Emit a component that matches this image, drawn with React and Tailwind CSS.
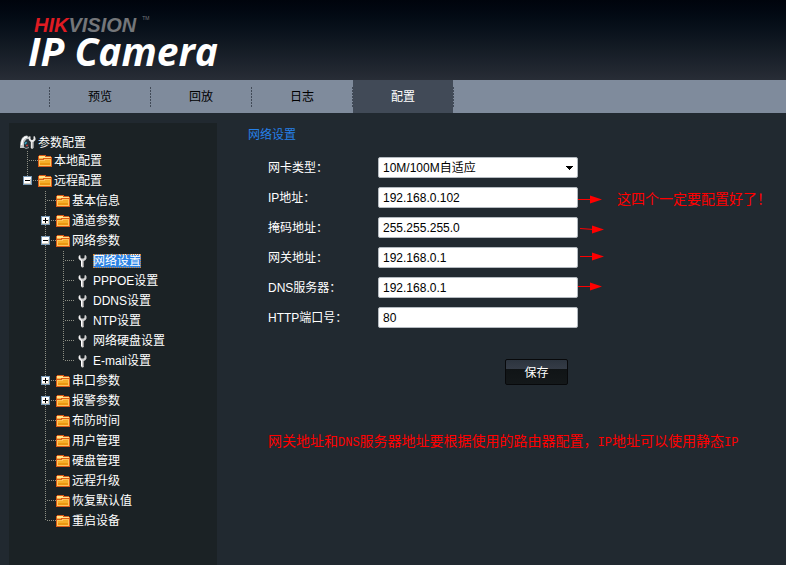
import { useState } from 'react';

const tabs = ['预览', '回放', '日志', '配置'];

const tree = [
  { label: '本地配置' },
  {
    label: '远程配置',
    open: true,
    children: [
      { label: '基本信息' },
      { label: '通道参数', children: [] },
      {
        label: '网络参数',
        open: true,
        children: [
          { label: '网络设置' },
          { label: 'PPPOE设置' },
          { label: 'DDNS设置' },
          { label: 'NTP设置' },
          { label: '网络硬盘设置' },
          { label: 'E-mail设置' },
        ],
      },
      { label: '串口参数', children: [] },
      { label: '报警参数', children: [] },
      { label: '布防时间' },
      { label: '用户管理' },
      { label: '硬盘管理' },
      { label: '远程升级' },
      { label: '恢复默认值' },
      { label: '重启设备' },
    ],
  },
];

const fields = [
  { id: 'ip', label: 'IP地址：', value: '192.168.0.102', arrow: { x: 0, y: 12, slope: 0 }, note: '这四个一定要配置好了！' },
  { id: 'mask', label: '掩码地址：', value: '255.255.255.0', arrow: { x: 2, y: 11, slope: 1 } },
  { id: 'gateway', label: '网关地址：', value: '192.168.0.1', arrow: { x: 2, y: 9, slope: 0 } },
  { id: 'dns', label: 'DNS服务器：', value: '192.168.0.1', arrow: { x: 0, y: 9, slope: 0 } },
  { id: 'http', label: 'HTTP端口号：', value: '80' },
];

const inputClass = 'h-[21px] w-full rounded-[2px] border border-[#b4bac0] bg-white px-1 text-xs text-black outline-none';

function Guide({ vertical, branch, last, toggle }) {
  return (
    <svg width="18" height="20" viewBox="0 0 18 20" shapeRendering="crispEdges" className="shrink-0" aria-hidden="true">
      {vertical && <path d={last ? 'M7.5 1V10' : 'M7.5 1V20'} stroke="#8d8f84" strokeDasharray="1 1" />}
      {branch && <path d="M9 10.5H18" stroke="#8d8f84" strokeDasharray="1 1" />}
      {toggle && (
        <g>
          <rect x="3" y="6" width="9" height="9" fill="#7898b5" />
          <rect x="4" y="7" width="7" height="7" fill="#fff" />
          <path d="M4 13.5H11M10.5 9V14" stroke="#d6d2c6" fill="none" />
          <path d={toggle === 'open' ? 'M5 10.5H10' : 'M5 10.5H10M7.5 8V13'} stroke="#000" />
        </g>
      )}
    </svg>
  );
}

function FolderIcon() {
  return (
    <svg width="14" height="12" viewBox="0 0 14 12" shapeRendering="crispEdges" className="shrink-0" aria-hidden="true">
      <path d="M1 0H8V1H13V2H14V12H0V1H1Z" fill="#d85a18" />
      <path d="M1 1H7V2H13V3H1Z" fill="#ffe58c" />
      <path d="M1 3H5V4H1Z" fill="#f5b545" />
      <path d="M1 5H6V4H13V11H1Z" fill="#ffc65c" />
      <path d="M2 6H7V5H12V10H2Z" fill="#f6ae2a" />
      <path d="M2 8H12V10H2Z" fill="#ec960f" />
    </svg>
  );
}

function WrenchIcon() {
  return (
    <svg width="9" height="14" viewBox="0 0 9 14" className="shrink-0" aria-hidden="true">
      <path d="M1.5 1L0.5 2.5V4.5L1.5 6L3 7V12.5L4 13.5H5L6 12.5V7L7.5 6L8.5 4.5V2.5L7.5 1L6.5 1.5V3.5L5.5 4.5H3.5L2.5 3.5V1.5Z" fill="#d0d0d0" />
      <path d="M1.5 2.5V4.5L3.5 6V12" stroke="#fff" fill="none" />
      <path d="M5.5 7V12.5" stroke="#8e8e8e" />
    </svg>
  );
}

function CameraIcon() {
  return (
    <svg width="16" height="16" viewBox="0 0 16 16" className="shrink-0" aria-hidden="true">
      <path d="M0 14L0.5 8L2 4L4.5 2L7 1.5L9 3L9 5L6.5 5.5L4.5 8L4 14Z" fill="#c3c7c9" />
      <path d="M1.5 11L2.5 6L5 3.5L7 3" stroke="#fff" strokeWidth="1.5" fill="none" />
      <path d="M4.5 8L6.5 5.5H9L10 9L9 13L6 14L4 12Z" fill="#26343c" />
      <path d="M5 10L6.5 8" stroke="#3aa5c4" strokeWidth="1.5" />
      <path d="M6 11.5H8" stroke="#c03b32" strokeWidth="1.5" />
      <path d="M3.5 13L6 14.5L9 13.5" stroke="#a1a7aa" fill="none" />
      <path d="M9.5 2L8.8 4V6L10.8 8V14L12 15L13.5 14V8L15.5 6V4L14.5 2L13.5 2.5V5L12.5 6H11.5L10.5 5V2.5Z" fill="#e8e8e8" />
      <path d="M13 8V14" stroke="#919191" />
    </svg>
  );
}

function TreeItem({ item, level, last, ancestors, selected, onSelect }) {
  const [open, setOpen] = useState(Boolean(item.open));
  const isSelected = selected === item.label;
  const guide = <Guide vertical branch last={last} toggle={item.children && (open ? 'open' : 'closed')} />;

  return (
    <li>
      <div className="flex h-5 items-center">
        {ancestors.map((line, i) => <Guide key={i} vertical={line} />)}
        {item.children ? (
          <button type="button" aria-label={item.label} aria-expanded={open} onClick={() => setOpen(!open)}>
            {guide}
          </button>
        ) : guide}
        {level === 3 ? <span className="pt-px pr-1.5 pl-1"><WrenchIcon /></span> : <span className="pt-0.5 pr-0.5"><FolderIcon /></span>}
        <a
          href="#"
          onClick={() => onSelect(item.label)}
          className={isSelected
            ? 'mt-0.5 bg-[#2a82e4] leading-[14px] text-white outline-1 -outline-offset-1 outline-dotted outline-[#d98a3c]'
            : 'mt-0.5 leading-[18px] text-white'}
        >
          {item.label}
        </a>
      </div>
      {open && item.children && item.children.length > 0 && (
        <ul>
          {item.children.map((child, i) => (
            <TreeItem
              key={child.label}
              item={child}
              level={level + 1}
              last={i === item.children.length - 1}
              ancestors={[...ancestors, !last]}
              selected={selected}
              onSelect={onSelect}
            />
          ))}
        </ul>
      )}
    </li>
  );
}

function Arrow({ x, y, slope }) {
  const end = y + slope + 0.5;
  return (
    <svg width="39" height="21" viewBox="0 0 39 21" className="shrink-0" aria-hidden="true">
      <path d={`M${x} ${y + 0.5}L${x + 14} ${end}`} stroke="#f00" />
      <path d={`M${x + 12} ${end - 4}L${x + 24} ${end}L${x + 12} ${end + 4}Z`} fill="#f00" />
    </svg>
  );
}

function TabDivider() {
  return <span className="h-5 w-px shrink-0 bg-[repeating-linear-gradient(to_bottom,#414a57_0_2px,transparent_2px_3px)]" />;
}

export default function App() {
  const [tab, setTab] = useState('配置');
  const [selected, setSelected] = useState('网络设置');

  return (
    <div className="flex min-h-screen flex-col bg-[#212930] font-['Liberation_Sans','Noto_Sans_CJK_SC',sans-serif] text-xs text-white">
      <header className="h-20 bg-linear-to-b from-[#00040c] to-[#282d36] pt-4 pl-7 font-bold italic">
        <div className="flex pl-1.5 text-[20px] leading-[18px]">
          <span className="text-[#e01b22]">HIK</span>
          <span className="text-[#747679]">VISION</span>
          <span className="pl-1.5 text-[5px] leading-none font-normal text-[#747679] not-italic">TM</span>
        </div>
        <h1 className="font-['Open_Sans','Noto_Sans',sans-serif] text-[39px] leading-[34px] text-white">IP Camera</h1>
      </header>

      <nav className="flex h-[33px] items-center bg-[#7f8b9c] pl-[49px]">
        <TabDivider />
        {tabs.map((name) => (
          <div key={name} className="flex h-full items-center">
            <a
              href="#"
              onClick={() => setTab(name)}
              className={`flex h-full w-[100px] items-center justify-center ${tab === name ? 'bg-[#414a57] text-white' : 'text-black'}`}
            >
              {name}
            </a>
            <TabDivider />
          </div>
        ))}
      </nav>

      <div className="flex flex-1 pt-2.5 pl-[9px]">
        <aside className="w-52 shrink-0 bg-[#1b2225] pt-2.5 pl-[11px]">
          <div className="flex h-[17px] items-center gap-0.5">
            <CameraIcon />
            <span className="mt-0.5">参数配置</span>
          </div>
          <ul>
            {tree.map((item, i) => (
              <TreeItem
                key={item.label}
                item={item}
                level={1}
                last={i === tree.length - 1}
                ancestors={[]}
                selected={selected}
                onSelect={setSelected}
              />
            ))}
          </ul>
        </aside>

        <main className="min-w-0 flex-1 pl-[31px]">
          <h2 className="pt-px leading-[22px] text-[#2680e8]">网络设置</h2>
          <form className="pt-[11px] pl-5" onSubmit={(e) => e.preventDefault()}>
            <div className="flex flex-col gap-[9px]">
              <div className="flex items-center">
                <label htmlFor="nic" className="w-[110px] shrink-0">网卡类型：</label>
                <div className="relative w-[200px] shrink-0">
                  <select id="nic" className={`${inputClass} appearance-none`}>
                    <option>10M/100M自适应</option>
                  </select>
                  <svg width="7" height="4" viewBox="0 0 7 4" shapeRendering="crispEdges" className="pointer-events-none absolute top-[9px] right-[5px]" aria-hidden="true">
                    <path d="M0 0H7V1H6V2H5V3H4V4H3V3H2V2H1V1H0Z" fill="#000" />
                  </svg>
                </div>
              </div>
              {fields.map((field) => (
                <div key={field.id} className="flex items-center">
                  <label htmlFor={field.id} className="w-[110px] shrink-0">{field.label}</label>
                  <div className="w-[200px] shrink-0">
                    <input id={field.id} type="text" defaultValue={field.value} className={inputClass} />
                  </div>
                  {field.arrow && <Arrow {...field.arrow} />}
                  {field.note && <span className="pt-1 text-sm leading-[17px] whitespace-nowrap text-[#f00]">{field.note}</span>}
                </div>
              ))}
            </div>
            <div className="pt-[31px] pl-[237px]">
              <button
                type="submit"
                className="h-[26px] w-[63px] rounded-[2px] border border-[#08090b] bg-[linear-gradient(to_bottom,#2c343e_0,#353c47_9px,#101416_9px,#14181a_100%)] pt-0.5 text-white"
              >
                保存
              </button>
            </div>
            <p className="pt-[46px] text-sm leading-5 whitespace-nowrap text-[#f00]">
              网关地址和<span className="font-['Liberation_Mono',monospace] text-xs">DNS</span>服务器地址要根据使用的路由器配置，<span className="font-['Liberation_Mono',monospace] text-xs">IP</span>地址可以使用静态<span className="font-['Liberation_Mono',monospace] text-xs">IP</span>
            </p>
          </form>
        </main>
      </div>
    </div>
  );
}
